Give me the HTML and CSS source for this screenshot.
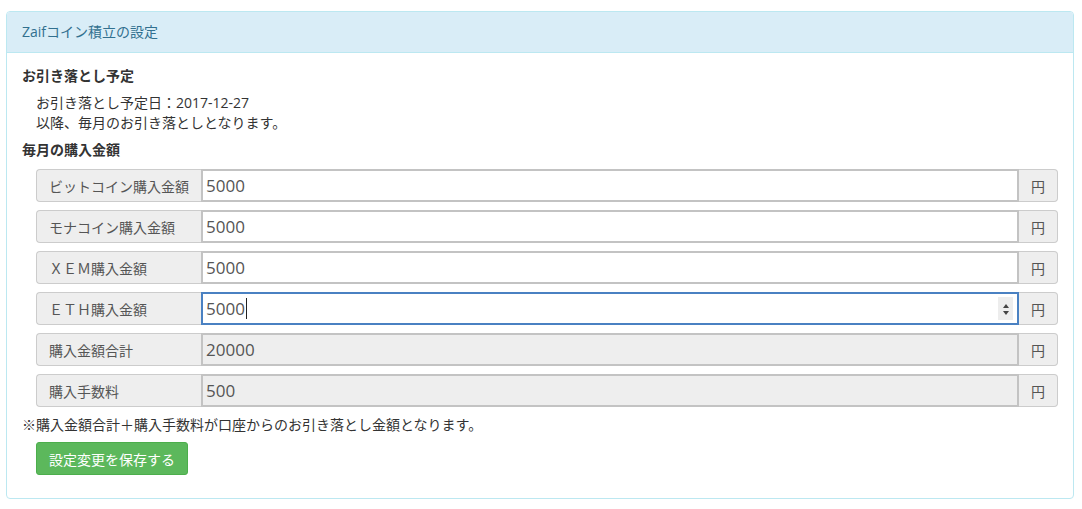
FILE: index.html
```html
<!DOCTYPE html>
<html lang="ja">
<head>
  <meta charset="UTF-8">
  <title>Zaifコイン積立の設定</title>
  <link rel="stylesheet" href="styles.css">
</head>
<body>
  <div class="panel">
    <div class="panel-heading">Zaifコイン積立の設定</div>
    <div class="panel-body">
      <h4 class="section-title">お引き落とし予定</h4>
      <div class="schedule">
        <p>お引き落とし予定日：2017-12-27</p>
        <p>以降、毎月のお引き落としとなります。</p>
      </div>

      <h4 class="section-title second">毎月の購入金額</h4>

      <div class="input-group">
        <span class="addon label">ビットコイン購入金額</span>
        <input class="field" type="text" value="5000">
        <span class="addon unit">円</span>
      </div>
      <div class="input-group">
        <span class="addon label">モナコイン購入金額</span>
        <input class="field" type="text" value="5000">
        <span class="addon unit">円</span>
      </div>
      <div class="input-group">
        <span class="addon label">ＸＥＭ購入金額</span>
        <input class="field" type="text" value="5000">
        <span class="addon unit">円</span>
      </div>
      <div class="input-group">
        <span class="addon label">ＥＴＨ購入金額</span>
        <div class="field focused">
          <span class="value">5000</span><span class="caret"></span>
          <span class="spinner">
            <svg width="8" height="16" viewBox="0 0 8 16"><path d="M4 3 L7 7 L1 7 Z M1 10 L7 10 L4 14 Z" fill="#444"/></svg>
          </span>
        </div>
        <span class="addon unit">円</span>
      </div>
      <div class="input-group">
        <span class="addon label">購入金額合計</span>
        <input class="field" type="text" value="20000" disabled>
        <span class="addon unit">円</span>
      </div>
      <div class="input-group">
        <span class="addon label">購入手数料</span>
        <input class="field" type="text" value="500" disabled>
        <span class="addon unit">円</span>
      </div>

      <p class="note">※購入金額合計＋購入手数料が口座からのお引き落とし金額となります。</p>

      <button class="btn-save">設定変更を保存する</button>
    </div>
  </div>
</body>
</html>
```

FILE: styles.css
```css
/* base */
body {
  font-family: "Open Sans", "Noto Sans CJK JP", sans-serif;
  font-size: 14px;
  color: #333333;
  background-color: #ffffff;
  margin: 0;
  padding: 11px 8px 0 6px;
}

p {
  margin: 0;
}

/* panel */
.panel {
  border: 1px solid #bce8f1;
  border-radius: 4px;
  background-color: #ffffff;
}

.panel-heading {
  background-color: #d9edf7;
  color: #31708f;
  border-bottom: 1px solid #bce8f1;
  border-radius: 3px 3px 0 0;
  padding: 0 15px;
  height: 40px;
  line-height: 40px;
}

.panel-body {
  padding: 13px 15px 23px 15px;
}

.section-title {
  font-size: 14px;
  font-weight: bold;
  margin: 0;
  line-height: 20px;
}

.section-title.second {
  margin-top: 7px;
  margin-bottom: 9px;
}

.schedule {
  margin-top: 7px;
  padding-left: 14px;
  line-height: 20px;
}

/* input groups */
.input-group {
  display: flex;
  height: 33px;
  margin-left: 14px;
  margin-bottom: 8px;
}

.addon {
  background-color: #eeeeee;
  border: 1px solid #cccccc;
  color: #555555;
  display: flex;
  align-items: center;
  box-sizing: border-box;
}

.addon.label {
  width: 165px;
  padding-left: 12px;
  border-right: none;
  border-radius: 4px 0 0 4px;
}

.addon.unit {
  width: 39px;
  justify-content: center;
  border-left: none;
  border-radius: 0 4px 4px 0;
}

.field {
  flex: 1;
  box-sizing: border-box;
  height: 33px;
  border: 2px solid #c3c3c3;
  padding: 0 3px;
  margin: 0;
  font-family: "Open Sans", "Noto Sans CJK JP", sans-serif;
  font-size: 17px;
  color: #555555;
  background-color: #ffffff;
  outline: none;
}

.field:disabled {
  background-color: #eeeeee;
  color: #555555;
}

.field.focused {
  position: relative;
  display: flex;
  align-items: center;
  border-color: #4a81c2;
}

.caret {
  display: inline-block;
  width: 1px;
  height: 21px;
  background-color: #222222;
  margin-left: 1px;
}

.spinner {
  position: absolute;
  right: 4px;
  top: 3px;
  width: 15px;
  height: 23px;
  background-color: #ededed;
  display: flex;
  align-items: center;
  justify-content: center;
}

.note {
  margin-top: 4px;
  line-height: 20px;
}

.btn-save {
  display: block;
  margin-top: 7px;
  margin-left: 14px;
  height: 33px;
  padding: 0 12px;
  background-color: #5cb85c;
  border: 1px solid #4cae4c;
  border-radius: 3px;
  color: #ffffff;
  font-family: "Open Sans", "Noto Sans CJK JP", sans-serif;
  font-size: 14px;
  cursor: pointer;
}
```
